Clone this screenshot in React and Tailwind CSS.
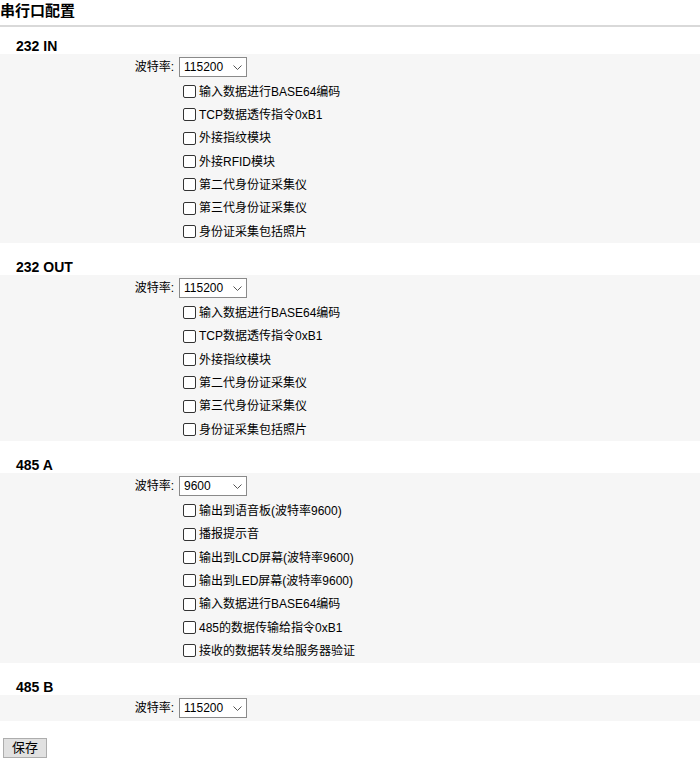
import React from 'react';

const sections = [
  {
    id: 'in232',
    title: '232 IN',
    baud: '115200',
    options: [
      '输入数据进行BASE64编码',
      'TCP数据透传指令0xB1',
      '外接指纹模块',
      '外接RFID模块',
      '第二代身份证采集仪',
      '第三代身份证采集仪',
      '身份证采集包括照片',
    ],
  },
  {
    id: 'out232',
    title: '232 OUT',
    baud: '115200',
    options: [
      '输入数据进行BASE64编码',
      'TCP数据透传指令0xB1',
      '外接指纹模块',
      '第二代身份证采集仪',
      '第三代身份证采集仪',
      '身份证采集包括照片',
    ],
  },
  {
    id: 'a485',
    title: '485 A',
    baud: '9600',
    options: [
      '输出到语音板(波特率9600)',
      '播报提示音',
      '输出到LCD屏幕(波特率9600)',
      '输出到LED屏幕(波特率9600)',
      '输入数据进行BASE64编码',
      '485的数据传输给指令0xB1',
      '接收的数据转发给服务器验证',
    ],
  },
  {
    id: 'b485',
    title: '485 B',
    baud: '115200',
    options: [],
  },
];

const bauds = ['9600', '19200', '38400', '57600', '115200'];

const BaudSelect = ({ value }) => (
  <span className="relative inline-flex">
    <select
      defaultValue={value}
      className="appearance-none w-[68px] h-[20px] border border-[#8a8a8a] bg-white pl-[4px] text-[12px] leading-[18px] text-black rounded-none outline-none"
    >
      {bauds.map((b) => (
        <option key={b} value={b}>{b}</option>
      ))}
    </select>
    <svg
      className="absolute right-[5px] top-[8px] pointer-events-none"
      width="9"
      height="5"
      viewBox="0 0 9 5"
      fill="none"
    >
      <path d="M0.5 0.5 L4.5 4.5 L8.5 0.5" stroke="#555" strokeWidth="1" />
    </svg>
  </span>
);

const Section = ({ section, first }) => (
  <div className={first ? 'mt-[11px]' : 'mt-[16px]'}>
    <div className="h-4 leading-4 pl-4 text-[14px] font-bold text-black">{section.title}</div>
    <div className="bg-[#f6f6f6]">
      <div className="flex items-center h-[26px]">
        <div className="w-[175px] text-right text-[12px] text-black pr-[1px]">波特率:</div>
        <div className="pl-[4px] flex items-center">
          <BaudSelect value={section.baud} />
        </div>
      </div>
      {section.options.map((opt) => (
        <label key={opt} className="flex items-center h-[23.33px] pl-[183px] text-[12px] text-black">
          <input
            type="checkbox"
            className="appearance-none m-0 w-[13px] h-[13px] border border-[#333] rounded-[2px] bg-white shrink-0"
          />
          <span className="ml-[3px] leading-[14px]">{opt}</span>
        </label>
      ))}
    </div>
  </div>
);

export default function App() {
  return (
    <div
      className="w-[700px] min-h-[764px] bg-white text-black"
      style={{ fontFamily: '"Liberation Sans", Arial, "Noto Sans CJK SC", sans-serif' }}
    >
      <div className="h-[25px] leading-[22px] text-[15px] font-bold">串行口配置</div>
      <div className="h-[2px] bg-[#d9d9d9]" />
      {sections.map((s, i) => (
        <Section key={s.id} section={s} first={i === 0} />
      ))}
      <div className="pt-[14px] pl-[3px]">
        <button className="w-[44px] h-[20px] border border-[#adadad] bg-[#e1e1e1] text-[13px] leading-[18px] text-black">
          保存
        </button>
      </div>
    </div>
  );
}
